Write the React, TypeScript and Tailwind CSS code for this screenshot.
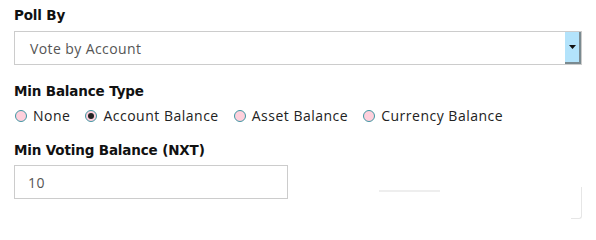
const options = [
  { label: "None", checked: false },
  { label: "Account Balance", checked: true },
  { label: "Asset Balance", checked: false },
  { label: "Currency Balance", checked: false },
];

function Radio({ label, checked }: { label: string; checked: boolean }) {
  return (
    <label className="flex items-center gap-[6px]">
      <span className="flex h-[12px] w-[12px] items-center justify-center rounded-full border border-[#3f97a3] bg-[#ffd0dc]">
        {checked && <span className="h-[6px] w-[6px] rounded-full bg-[#222]" />}
      </span>
      <span className="text-[14px] text-[#222] tracking-[0.5px]">{label}</span>
    </label>
  );
}

export default function App() {
  return (
    <div className="relative h-[229px] w-[596px] bg-white px-[14px] pt-[6px] font-['Open_Sans',sans-serif]">
      {/* Poll By */}
      <div className="font-['DejaVu_Sans',sans-serif] text-[13.5px] font-bold leading-[18px] tracking-[-0.15px] text-[#111]">Poll By</div>
      <div className="mt-[7px] flex h-[34px] w-[568px] items-stretch border border-[#ccc] bg-white">
        <div className="flex flex-1 items-center pl-[15px] text-[14px] text-[#555] tracking-[0.4px]">Vote by Account</div>
        <div className="flex w-[16px] items-center justify-center border-r-2 border-b-2 border-[#7a8a90] bg-[#b3e3fb]">
          <svg width="7" height="4" viewBox="0 0 7 4"><path d="M0 0h7L3.5 4z" fill="#111" /></svg>
        </div>
      </div>

      {/* Min Balance Type */}
      <div className="mt-[17px] font-['DejaVu_Sans',sans-serif] text-[13.5px] font-bold leading-[18px] tracking-[-0.15px] text-[#111]">Min Balance Type</div>
      <div className="mt-[5px] flex items-center gap-[15px] pl-[1px]">
        {options.map((o) => (
          <Radio key={o.label} {...o} />
        ))}
      </div>

      {/* Min Voting Balance */}
      <div className="mt-[15px] font-['DejaVu_Sans',sans-serif] text-[13.5px] font-bold leading-[18px] tracking-[-0.15px] text-[#111]">Min Voting Balance (NXT)</div>
      <div className="mt-[6px] flex h-[34px] w-[274px] items-center border border-[#ccc] pl-[13px] text-[14px] text-[#555] tracking-[0.4px]">10</div>

      {/* faint leftovers */}
      <div className="absolute left-[379px] top-[190px] h-[2px] w-[61px] bg-[#eee]" />
      <div className="absolute left-[571px] top-[187px] h-[32px] w-[11px] rounded-br-[3px] border-r border-b border-[#e6e6e6]" />
    </div>
  );
}
